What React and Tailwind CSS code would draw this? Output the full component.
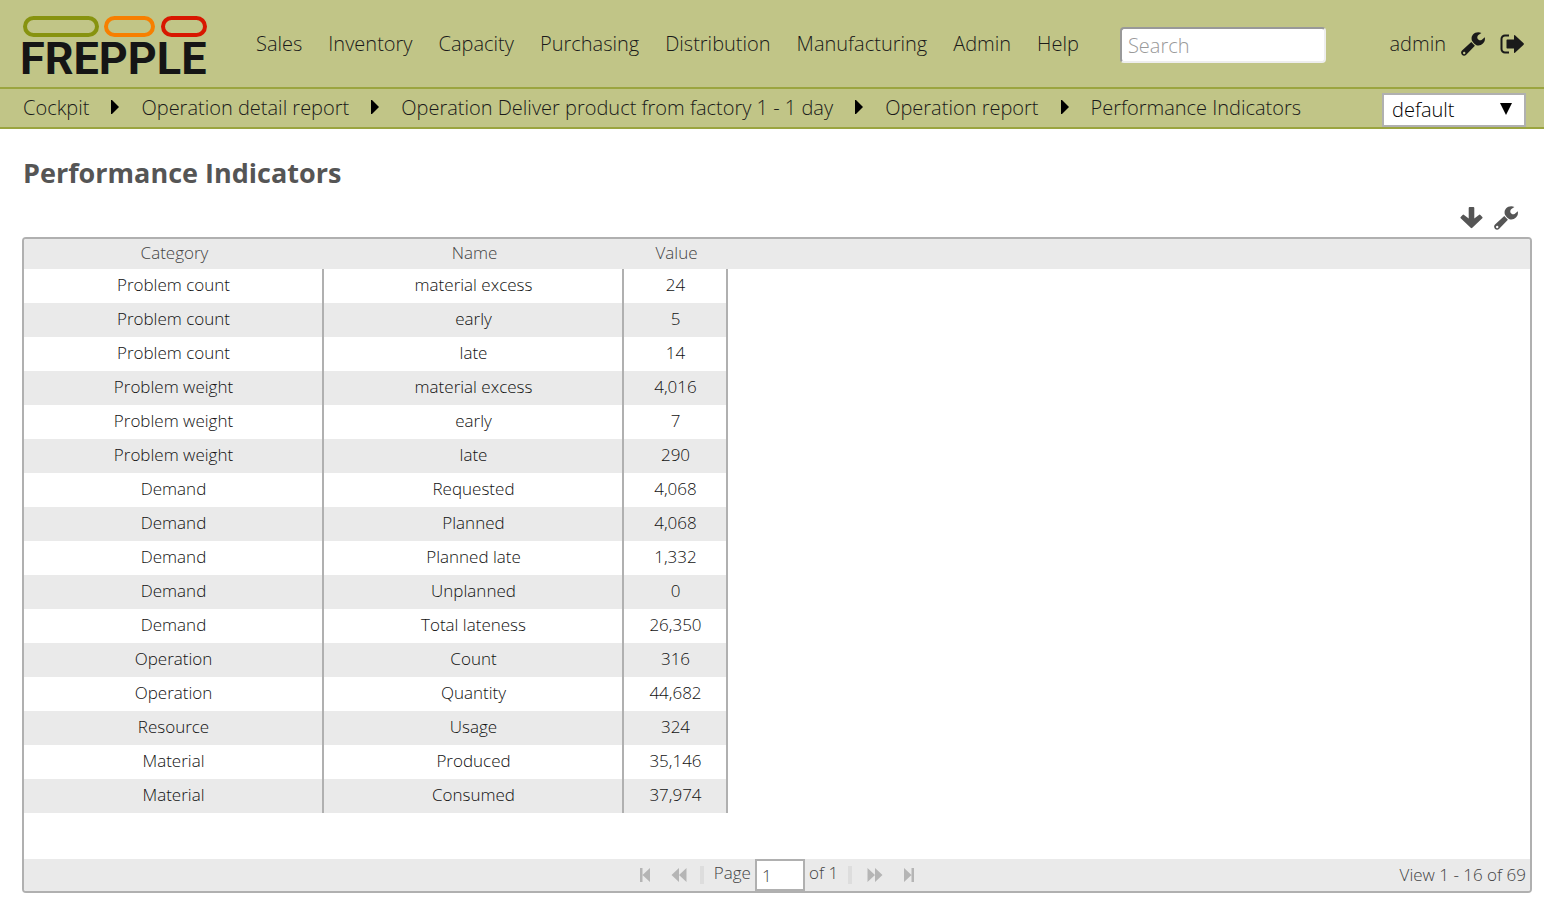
const navItems = ['Sales', 'Inventory', 'Capacity', 'Purchasing', 'Distribution', 'Manufacturing', 'Admin', 'Help'];

const crumbs = [
  'Cockpit',
  'Operation detail report',
  'Operation Deliver product from factory 1 - 1 day',
  'Operation report',
  'Performance Indicators',
];

const rows = [
  ['Problem count', 'material excess', '24'],
  ['Problem count', 'early', '5'],
  ['Problem count', 'late', '14'],
  ['Problem weight', 'material excess', '4,016'],
  ['Problem weight', 'early', '7'],
  ['Problem weight', 'late', '290'],
  ['Demand', 'Requested', '4,068'],
  ['Demand', 'Planned', '4,068'],
  ['Demand', 'Planned late', '1,332'],
  ['Demand', 'Unplanned', '0'],
  ['Demand', 'Total lateness', '26,350'],
  ['Operation', 'Count', '316'],
  ['Operation', 'Quantity', '44,682'],
  ['Resource', 'Usage', '324'],
  ['Material', 'Produced', '35,146'],
  ['Material', 'Consumed', '37,974'],
];

function Wrench() {
  return (
    <svg viewBox="0 0 24 24" className="size-6" aria-hidden="true">
      <path
        fill="currentColor"
        fillRule="evenodd"
        d="M20.4.9 C17.2-.4 13.9.4 12 2.6 C10.5 4.4 10.2 6.6 11 8.8 L12.2 10.6 L13.6 12 L15.4 13.2 C17.7 14 20.2 13.4 21.9 11.6 C23.5 10 24.3 7.8 23.8 5.2 L20.6 7.9 C19 8.6 17.2 8 16.6 6.7 C16 5.2 16.3 3.9 17.4 3.1 Z M10.3 9.9 L1 18.4 C-.2 19.6-.2 21.4.9 22.7 C2.1 24 4 24 5.2 22.8 L13.9 13.8 Z M3.2 19.8 A1.2 1.2 0 1 0 3.2 22.2 A1.2 1.2 0 1 0 3.2 19.8 Z"
      />
    </svg>
  );
}

function SignOut() {
  return (
    <svg viewBox="0 0 24 20" className="h-5 w-6" aria-hidden="true">
      <path d="M9 1.5H5A3.5 3.5 0 0 0 1.5 5V15A3.5 3.5 0 0 0 5 18.5H9" fill="none" stroke="currentColor" strokeWidth="2" />
      <path d="M6.5 6.2Q6.5 5.5 7.2 5.5H14V1.4Q14.2.6 15 1.2L23.6 9.3Q24.2 10 23.6 10.7L15 18.8Q14.2 19.4 14 18.6V14.5H7.2Q6.5 14.5 6.5 13.8Z" fill="currentColor" />
    </svg>
  );
}

function ArrowDown() {
  return (
    <svg viewBox="0 0 24 24" className="size-6" aria-hidden="true">
      <path
        fill="currentColor"
        d="M10.7 1H14.3Q15.3 1 15.3 2V12.6L19.9 8.9Q20.7 8.3 21.4 9L23.3 10.9Q24 11.6 23.3 12.3L13.3 21.8Q12.5 22.5 11.7 21.8L1.7 12.3Q1 11.6 1.7 10.9L3.6 9Q4.3 8.3 5.1 8.9L9.7 12.6V2Q9.7 1 10.7 1Z"
      />
    </svg>
  );
}

function Logo() {
  return (
    <svg viewBox="0 0 190 72" className="h-[72px] w-[190px] overflow-visible" role="img" aria-label="FREPPLE">
      <g fill="none" strokeWidth="4">
        <rect x="3" y="10" width="72" height="17" rx="8.5" stroke="#87930f" />
        <rect x="84" y="10" width="47" height="17" rx="8.5" stroke="#f77f00" />
        <rect x="141" y="10" width="42" height="17" rx="8.5" stroke="#d81700" />
      </g>
      <text x="-2" y="66" fill="#151515" className="font-[Roboto,sans-serif] text-[45px] leading-none font-bold">
        FREPPLE
      </text>
    </svg>
  );
}

function PagerIcon({ type }) {
  const flip = type === 'last' || type === 'next';
  const outer = type === 'first' || type === 'last';
  return (
    <svg viewBox="0 0 16 14" className={flip ? 'h-3.5 w-4 rotate-180' : 'h-3.5 w-4'} fill="currentColor" aria-hidden="true">
      {outer ? <path d="M3 0H5.5V14H3ZM13 0V14L5.5 7Z" /> : <path d="M8 0V14L.5 7ZM15.5 0V14L8 7Z" />}
    </svg>
  );
}

function PagerButton({ type, label }) {
  return (
    <button type="button" aria-label={label} className="flex h-8 w-[34px] items-center justify-center text-[#b5b5b5]">
      <PagerIcon type={type} />
    </button>
  );
}

export default function App() {
  return (
    <div className="min-h-screen bg-white pb-7 font-['Open_Sans',sans-serif] font-light text-[#1a1a1a]">
      <header className="bg-[#c1c587] text-xl">
        <div className="flex h-[89px] items-center border-b-2 border-[#9ba53f] pr-5 pl-[22px]">
          <a href="#home">
            <Logo />
          </a>
          <nav className="ml-11 flex gap-[26px]">
            {navItems.map((item) => (
              <a key={item} href={`#${item.toLowerCase()}`}>
                {item}
              </a>
            ))}
          </nav>
          <input
            type="search"
            aria-label="Search"
            placeholder="Search"
            className="mt-0.5 ml-[41px] h-9 w-[206px] rounded border-2 border-t-[#999] border-r-[#eee] border-b-[#eee] border-l-[#999] bg-white px-1.5 pt-0.5 placeholder:text-[#999]"
          />
          <div className="ml-auto flex items-center gap-[15px]">
            <a href="#admin-user">admin</a>
            <button type="button" aria-label="Preferences">
              <Wrench />
            </button>
            <button type="button" aria-label="Log out">
              <SignOut />
            </button>
          </div>
        </div>
        <div className="flex h-10 items-center border-b-2 border-[#9ba53f] pr-[18px] pl-[23px]">
          <nav aria-label="Breadcrumb" className="flex items-center">
            {crumbs.map((crumb, i) => (
              <span key={crumb} className="flex items-center">
                {i > 0 && (
                  <svg viewBox="0 0 8 14" className="mx-[22px] mb-0.5 h-3.5 w-2" aria-hidden="true">
                    <path d="M0 0H1L8 7L1 14H0Z" fill="#000" />
                  </svg>
                )}
                <a href="#crumb">{crumb}</a>
              </span>
            ))}
          </nav>
          <div className="relative mt-1 ml-auto">
            <select
              aria-label="Scenario"
              className="block h-[34px] w-36 appearance-none border-2 border-[#b0b0b0] bg-white pl-2 text-black"
            >
              <option>default</option>
            </select>
            <svg viewBox="0 0 12 12" className="pointer-events-none absolute top-2.5 right-3.5 size-3" aria-hidden="true">
              <path d="M0 0H12L6 12Z" fill="#000" />
            </svg>
          </div>
        </div>
      </header>

      <main className="pr-3 pl-[22px] text-[#555]">
        <h1 className="pt-6 pl-px text-[27px] leading-10 font-bold">Performance Indicators</h1>
        <div className="mt-[13px] mb-[7px] flex justify-end gap-[11px] pr-3.5">
          <button type="button" aria-label="Download">
            <ArrowDown />
          </button>
          <button type="button" aria-label="Customize">
            <Wrench />
          </button>
        </div>

        <section className="overflow-hidden rounded border-2 border-[#b0b0b0] text-[17px] text-[#444]">
          <div className="bg-[linear-gradient(#eaeaea_30px,#fff_30px)] pb-[46px]">
            <table className="w-[704px] table-fixed border-separate border-spacing-0 text-center">
              <thead>
                <tr className="h-[30px]">
                  <th className="w-[300px] p-0 pb-0.5 pl-px leading-7 font-light">Category</th>
                  <th className="w-[300px] p-0 pb-0.5 pl-px leading-7 font-light">Name</th>
                  <th className="w-[104px] p-0 pb-0.5 pl-px leading-7 font-light">Value</th>
                </tr>
              </thead>
              <tbody className="text-[#111]">
                {rows.map((row, i) => (
                  <tr key={i} className="h-[34px] even:bg-[#eaeaea]">
                    {row.map((cell, j) => (
                      <td key={j} className="border-r-2 border-[#b0b0b0] p-0 pb-0.5 pl-px leading-8">
                        {cell}
                      </td>
                    ))}
                  </tr>
                ))}
              </tbody>
            </table>
          </div>
          <footer className="grid h-8 grid-cols-[1fr_auto_1fr] items-center bg-[#eaeaea]">
            <div />
            <div className="flex items-center">
              <PagerButton type="first" label="First page" />
              <PagerButton type="prev" label="Previous page" />
              <span className="mr-1.5 ml-1 h-[18px] w-1 bg-[#ddd]" />
              <label htmlFor="page" className="mx-1 pb-1">
                Page
              </label>
              <input
                id="page"
                defaultValue="1"
                className="h-8 w-[50px] border-2 border-[#b0b0b0] bg-white px-[5px]"
              />
              <span className="mx-1 pb-1">of 1</span>
              <span className="mx-1.5 h-[18px] w-1 bg-[#ddd]" />
              <PagerButton type="next" label="Next page" />
              <PagerButton type="last" label="Last page" />
            </div>
            <div className="pr-1 text-right">View 1 - 16 of 69</div>
          </footer>
        </section>
      </main>
    </div>
  );
}
